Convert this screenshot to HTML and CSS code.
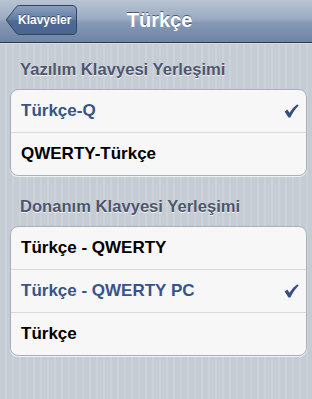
FILE: index.html
```html
<!DOCTYPE html>
<html lang="tr">
<head>
<meta charset="utf-8">
<title>Türkçe</title>
<link rel="stylesheet" href="styles.css">
</head>
<body>
<header class="nav">
  <div class="nav-left">
    <a class="back">
      <svg class="back-shape" width="72" height="30" viewBox="0 0 72 30">
        <defs>
          <linearGradient id="bg" x1="0" y1="0" x2="0" y2="1">
            <stop offset="0" stop-color="#8ca1bf"/>
            <stop offset="0.5" stop-color="#5f7aa2"/>
            <stop offset="0.52" stop-color="#4e6b96"/>
            <stop offset="1" stop-color="#4a6690"/>
          </linearGradient>
        </defs>
        <path d="M1.2 15 L11 2.2 Q12.3 0.5 14.5 0.5 H67 Q71.5 0.5 71.5 5 V25 Q71.5 29.5 67 29.5 H14.5 Q12.3 29.5 11 27.8 Z" fill="url(#bg)" stroke="#34445e" stroke-width="1"/>
      </svg>
      <span class="back-label">Klavyeler</span>
    </a>
  </div>
  <h1 class="title">Türkçe</h1>
  <div class="nav-right"></div>
</header>

<main class="content">
  <h2 class="section-title first">Yazılım Klavyesi Yerleşimi</h2>
  <ul class="group">
    <li class="row selected"><span>Türkçe-Q</span>
      <svg class="check" width="15" height="14" viewBox="0 0 15 14"><path d="M0.6 7.6 L3.3 5.6 L5.5 8.7 Q8.9 3.2 13.3 0.2 L14.6 1.7 Q10 6 6.3 13.6 L4.5 13.6 Z" fill="#374f80"/></svg>
    </li>
    <li class="row"><span>QWERTY-Türkçe</span></li>
  </ul>

  <h2 class="section-title">Donanım Klavyesi Yerleşimi</h2>
  <ul class="group">
    <li class="row"><span>Türkçe - QWERTY</span></li>
    <li class="row selected"><span>Türkçe - QWERTY PC</span>
      <svg class="check" width="15" height="14" viewBox="0 0 15 14"><path d="M0.6 7.6 L3.3 5.6 L5.5 8.7 Q8.9 3.2 13.3 0.2 L14.6 1.7 Q10 6 6.3 13.6 L4.5 13.6 Z" fill="#374f80"/></svg>
    </li>
    <li class="row"><span>Türkçe</span></li>
  </ul>
</main>
</body>
</html>
```

FILE: styles.css
```css
* { box-sizing: border-box; }

html, body {
  margin: 0;
  padding: 0;
}

body {
  width: 312px;
  height: 399px;
  overflow: hidden;
  font-family: "Liberation Sans", Arial, Helvetica, sans-serif;
  background-color: #c5ccd4;
  background-image: repeating-linear-gradient(to right, #c5ccd4 0, #c5ccd4 5px, #cbd2d9 5px, #cbd2d9 7px);
}

.nav {
  height: 43px;
  display: grid;
  grid-template-columns: 1fr auto 1fr;
  align-items: center;
  background: linear-gradient(to bottom, #b9c4d2 0%, #9aabc2 45%, #8599b5 55%, #6d84a3 100%);
  border-bottom: 1px solid #2e3947;
  box-shadow: 0 1px 0 #d7dce3;
}

.nav-left {
  display: flex;
  align-items: center;
  padding-left: 5px;
}

.back {
  display: grid;
  width: 72px;
  height: 30px;
  margin-top: -2px;
}

.back-shape,
.back-label {
  grid-area: 1 / 1;
}

.back-label {
  align-self: center;
  justify-self: start;
  padding-left: 13px;
  color: #fff;
  font-weight: bold;
  font-size: 12px;
  line-height: 14px;
  text-shadow: 0 -1px 0 rgba(0, 0, 0, 0.45);
}

.title {
  margin: -2px 0 0 7px;
  color: #fff;
  font-size: 20px;
  font-weight: bold;
  line-height: 24px;
  text-shadow: 0 -1px 0 rgba(40, 50, 70, 0.7);
}

.content {
  padding: 0 5px 0 10px;
}

.section-title {
  margin: 0;
  padding: 21px 10px 9px;
  font-size: 16.6px;
  line-height: 20px;
  font-weight: bold;
  color: #4c566c;
  text-shadow: 0 1px 0 rgba(255, 255, 255, 0.8);
}

.section-title.first {
  padding-top: 17px;
  padding-bottom: 9px;
}

.group {
  list-style: none;
  margin: 0;
  padding: 0;
  background: #f7f7f7;
  border: 1px solid #abb0b7;
  border-radius: 8px;
  box-shadow: 0 1px 0 rgba(255, 255, 255, 0.7);
}

.row {
  height: 42px;
  display: flex;
  align-items: center;
  justify-content: space-between;
  padding: 0 7px 0 10px;
  font-size: 17px;
  font-weight: bold;
  color: #000;
}

.row + .row {
  border-top: 1px solid #d9d9d9;
  height: 43px;
}

.row.selected {
  color: #385487;
}

.check {
  display: block;
}
```
